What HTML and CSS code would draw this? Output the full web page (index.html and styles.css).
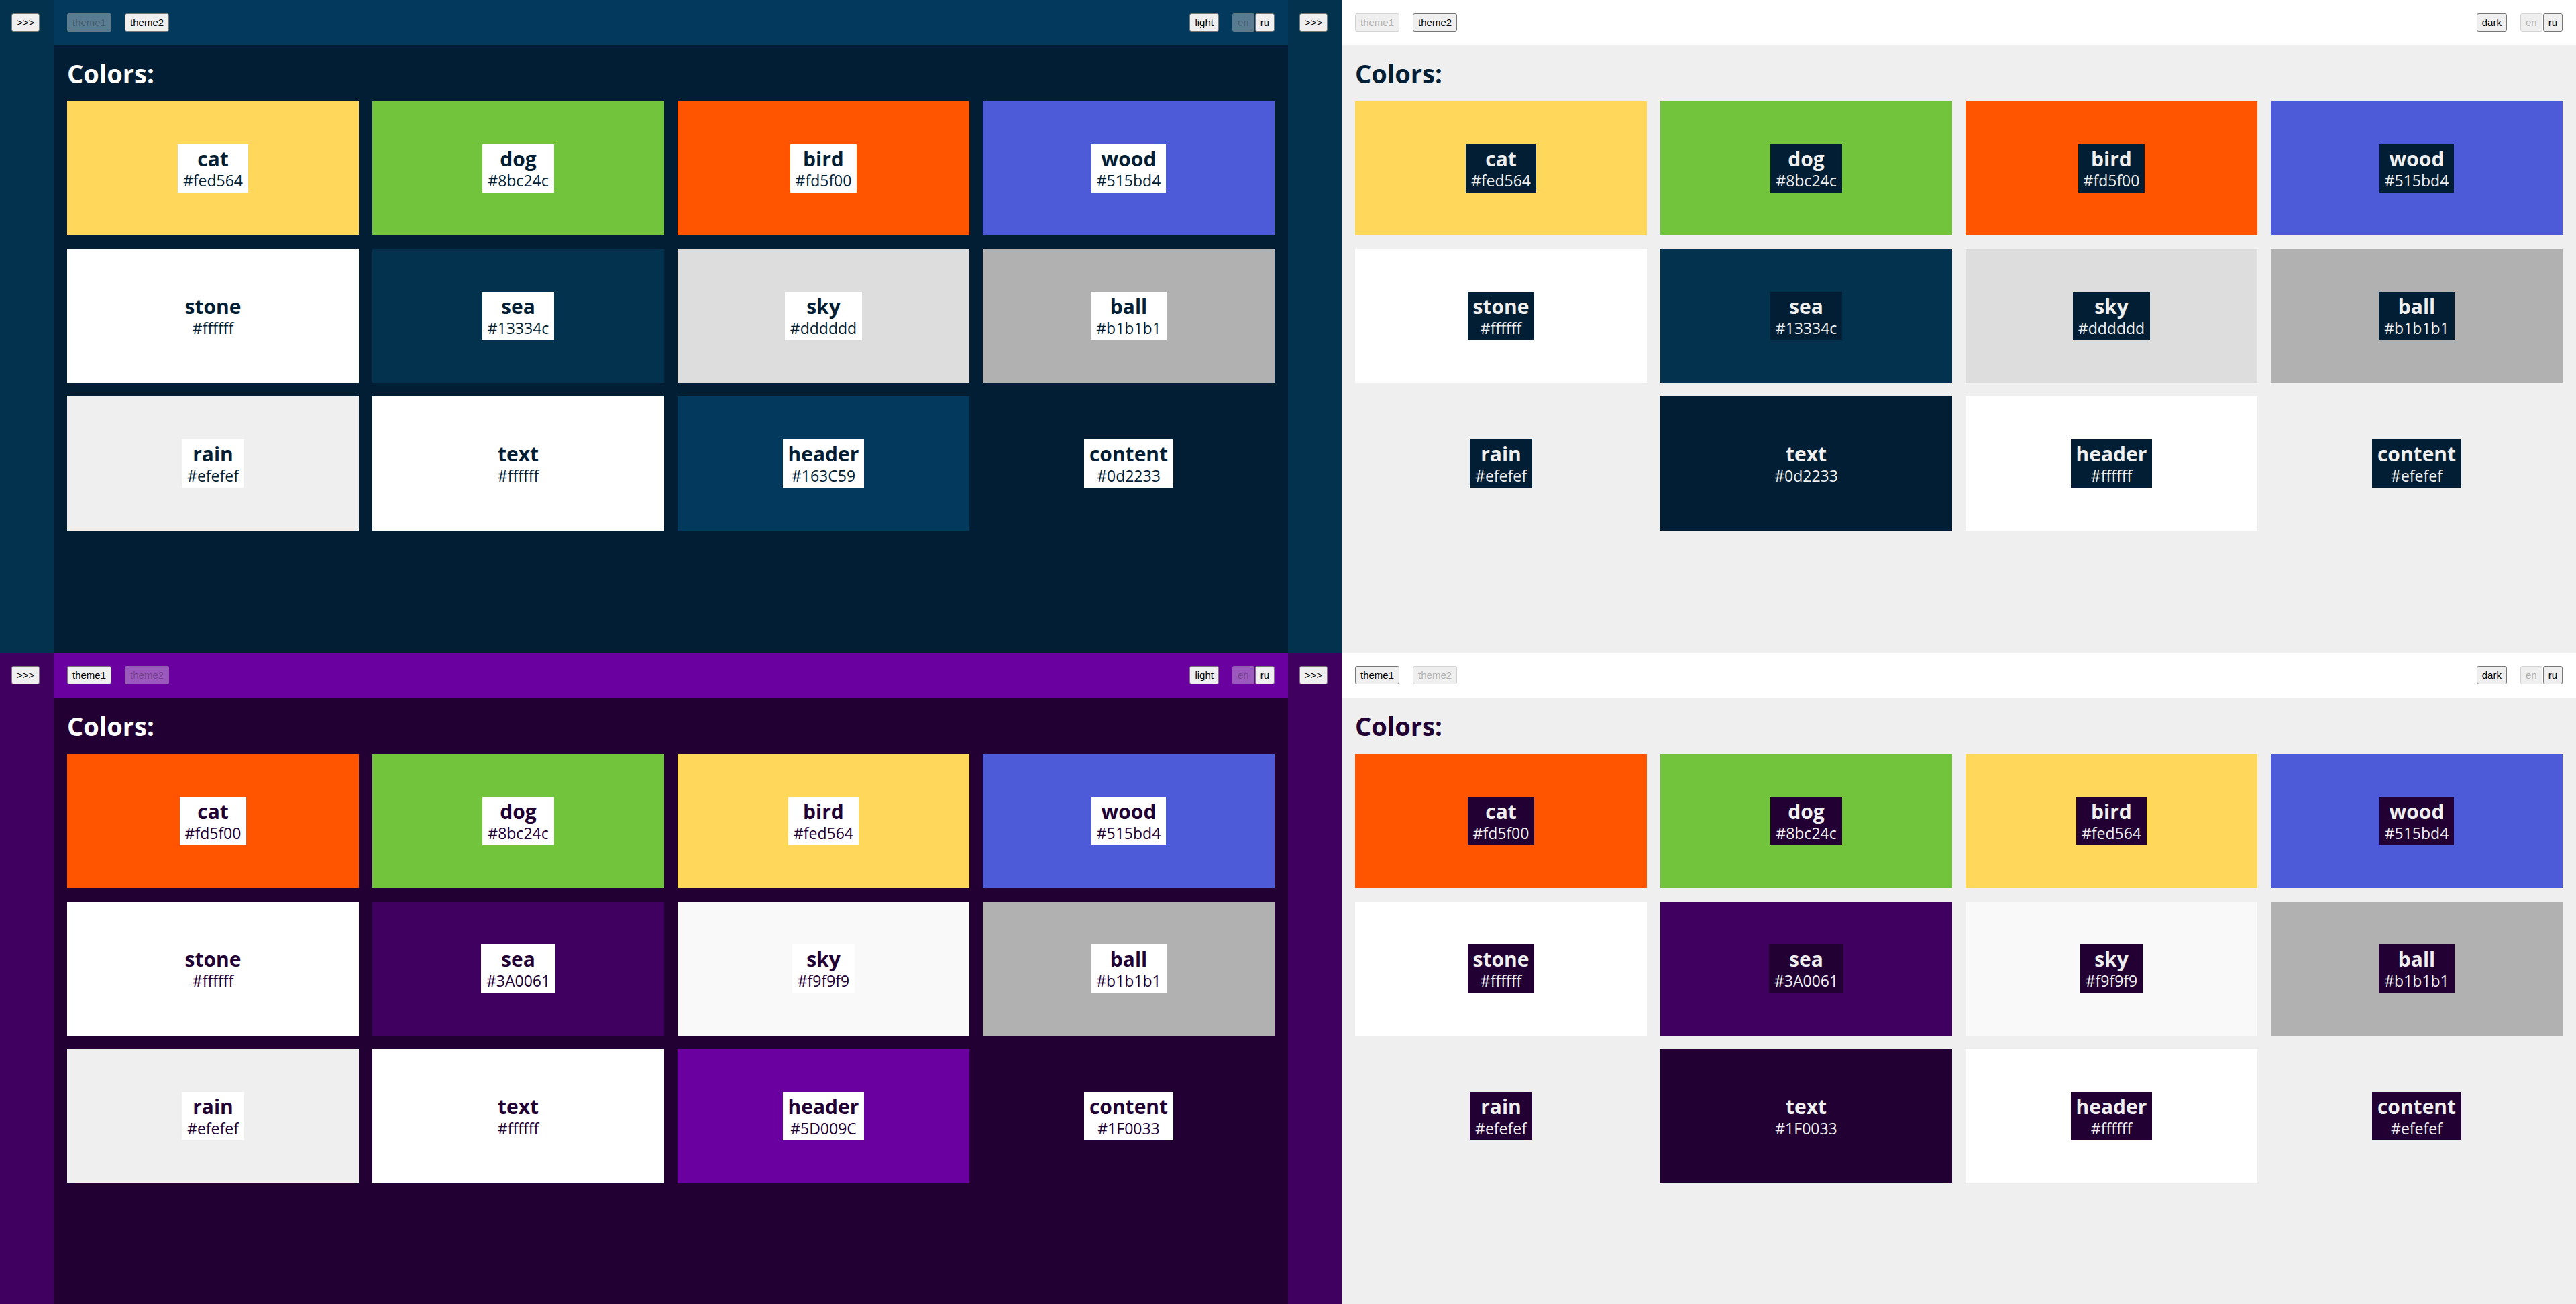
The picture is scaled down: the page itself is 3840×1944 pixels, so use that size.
FILE: index.html
```html
<!DOCTYPE html>
<html lang="en">
<head>
<meta charset="utf-8">
<title>Colors</title>
<link rel="stylesheet" href="styles.css">
</head>
<body>
<div class="screen">

  <div class="app t1 dark">
    <aside class="sidebar"><button class="btn">&gt;&gt;&gt;</button></aside>
    <div class="main">
      <header class="header">
        <div class="group"><button class="btn" disabled>theme1</button><button class="btn">theme2</button></div>
        <div class="group"><button class="btn">light</button><div class="langs"><button class="btn" disabled>en</button><button class="btn">ru</button></div></div>
      </header>
      <section class="content">
        <h2 class="title">Colors:</h2>
        <div class="grid">
          <div class="card c-cat"><div class="label"><div class="name">cat</div><div class="hex">#fed564</div></div></div>
          <div class="card c-dog"><div class="label"><div class="name">dog</div><div class="hex">#8bc24c</div></div></div>
          <div class="card c-bird"><div class="label"><div class="name">bird</div><div class="hex">#fd5f00</div></div></div>
          <div class="card c-wood"><div class="label"><div class="name">wood</div><div class="hex">#515bd4</div></div></div>
          <div class="card c-stone"><div class="label"><div class="name">stone</div><div class="hex">#ffffff</div></div></div>
          <div class="card c-sea"><div class="label"><div class="name">sea</div><div class="hex">#13334c</div></div></div>
          <div class="card c-sky"><div class="label"><div class="name">sky</div><div class="hex">#dddddd</div></div></div>
          <div class="card c-ball"><div class="label"><div class="name">ball</div><div class="hex">#b1b1b1</div></div></div>
          <div class="card c-rain"><div class="label"><div class="name">rain</div><div class="hex">#efefef</div></div></div>
          <div class="card c-text"><div class="label"><div class="name">text</div><div class="hex">#ffffff</div></div></div>
          <div class="card c-header"><div class="label"><div class="name">header</div><div class="hex">#163C59</div></div></div>
          <div class="card c-content"><div class="label"><div class="name">content</div><div class="hex">#0d2233</div></div></div>
        </div>
      </section>
    </div>
  </div>

  <div class="app t1 light">
    <aside class="sidebar"><button class="btn">&gt;&gt;&gt;</button></aside>
    <div class="main">
      <header class="header">
        <div class="group"><button class="btn" disabled>theme1</button><button class="btn">theme2</button></div>
        <div class="group"><button class="btn">dark</button><div class="langs"><button class="btn" disabled>en</button><button class="btn">ru</button></div></div>
      </header>
      <section class="content">
        <h2 class="title">Colors:</h2>
        <div class="grid">
          <div class="card c-cat"><div class="label"><div class="name">cat</div><div class="hex">#fed564</div></div></div>
          <div class="card c-dog"><div class="label"><div class="name">dog</div><div class="hex">#8bc24c</div></div></div>
          <div class="card c-bird"><div class="label"><div class="name">bird</div><div class="hex">#fd5f00</div></div></div>
          <div class="card c-wood"><div class="label"><div class="name">wood</div><div class="hex">#515bd4</div></div></div>
          <div class="card c-stone"><div class="label"><div class="name">stone</div><div class="hex">#ffffff</div></div></div>
          <div class="card c-sea"><div class="label"><div class="name">sea</div><div class="hex">#13334c</div></div></div>
          <div class="card c-sky"><div class="label"><div class="name">sky</div><div class="hex">#dddddd</div></div></div>
          <div class="card c-ball"><div class="label"><div class="name">ball</div><div class="hex">#b1b1b1</div></div></div>
          <div class="card c-rain"><div class="label"><div class="name">rain</div><div class="hex">#efefef</div></div></div>
          <div class="card c-text"><div class="label"><div class="name">text</div><div class="hex">#0d2233</div></div></div>
          <div class="card c-header"><div class="label"><div class="name">header</div><div class="hex">#ffffff</div></div></div>
          <div class="card c-content"><div class="label"><div class="name">content</div><div class="hex">#efefef</div></div></div>
        </div>
      </section>
    </div>
  </div>

  <div class="app t2 dark">
    <aside class="sidebar"><button class="btn">&gt;&gt;&gt;</button></aside>
    <div class="main">
      <header class="header">
        <div class="group"><button class="btn">theme1</button><button class="btn" disabled>theme2</button></div>
        <div class="group"><button class="btn">light</button><div class="langs"><button class="btn" disabled>en</button><button class="btn">ru</button></div></div>
      </header>
      <section class="content">
        <h2 class="title">Colors:</h2>
        <div class="grid">
          <div class="card c-cat"><div class="label"><div class="name">cat</div><div class="hex">#fd5f00</div></div></div>
          <div class="card c-dog"><div class="label"><div class="name">dog</div><div class="hex">#8bc24c</div></div></div>
          <div class="card c-bird"><div class="label"><div class="name">bird</div><div class="hex">#fed564</div></div></div>
          <div class="card c-wood"><div class="label"><div class="name">wood</div><div class="hex">#515bd4</div></div></div>
          <div class="card c-stone"><div class="label"><div class="name">stone</div><div class="hex">#ffffff</div></div></div>
          <div class="card c-sea"><div class="label"><div class="name">sea</div><div class="hex">#3A0061</div></div></div>
          <div class="card c-sky"><div class="label"><div class="name">sky</div><div class="hex">#f9f9f9</div></div></div>
          <div class="card c-ball"><div class="label"><div class="name">ball</div><div class="hex">#b1b1b1</div></div></div>
          <div class="card c-rain"><div class="label"><div class="name">rain</div><div class="hex">#efefef</div></div></div>
          <div class="card c-text"><div class="label"><div class="name">text</div><div class="hex">#ffffff</div></div></div>
          <div class="card c-header"><div class="label"><div class="name">header</div><div class="hex">#5D009C</div></div></div>
          <div class="card c-content"><div class="label"><div class="name">content</div><div class="hex">#1F0033</div></div></div>
        </div>
      </section>
    </div>
  </div>

  <div class="app t2 light">
    <aside class="sidebar"><button class="btn">&gt;&gt;&gt;</button></aside>
    <div class="main">
      <header class="header">
        <div class="group"><button class="btn">theme1</button><button class="btn" disabled>theme2</button></div>
        <div class="group"><button class="btn">dark</button><div class="langs"><button class="btn" disabled>en</button><button class="btn">ru</button></div></div>
      </header>
      <section class="content">
        <h2 class="title">Colors:</h2>
        <div class="grid">
          <div class="card c-cat"><div class="label"><div class="name">cat</div><div class="hex">#fd5f00</div></div></div>
          <div class="card c-dog"><div class="label"><div class="name">dog</div><div class="hex">#8bc24c</div></div></div>
          <div class="card c-bird"><div class="label"><div class="name">bird</div><div class="hex">#fed564</div></div></div>
          <div class="card c-wood"><div class="label"><div class="name">wood</div><div class="hex">#515bd4</div></div></div>
          <div class="card c-stone"><div class="label"><div class="name">stone</div><div class="hex">#ffffff</div></div></div>
          <div class="card c-sea"><div class="label"><div class="name">sea</div><div class="hex">#3A0061</div></div></div>
          <div class="card c-sky"><div class="label"><div class="name">sky</div><div class="hex">#f9f9f9</div></div></div>
          <div class="card c-ball"><div class="label"><div class="name">ball</div><div class="hex">#b1b1b1</div></div></div>
          <div class="card c-rain"><div class="label"><div class="name">rain</div><div class="hex">#efefef</div></div></div>
          <div class="card c-text"><div class="label"><div class="name">text</div><div class="hex">#1F0033</div></div></div>
          <div class="card c-header"><div class="label"><div class="name">header</div><div class="hex">#ffffff</div></div></div>
          <div class="card c-content"><div class="label"><div class="name">content</div><div class="hex">#efefef</div></div></div>
        </div>
      </section>
    </div>
  </div>

</div>
</body>
</html>
```

FILE: styles.css
```css
html, body {
  margin: 0;
  padding: 0;
}

body {
  width: 3840px;
  height: 1944px;
  overflow: hidden;
  font-family: "Open Sans", "Noto Sans", sans-serif;
}

.screen {
  display: grid;
  grid-template-columns: 1920px 1920px;
  grid-template-rows: 973px 971px;
}

/* theme palettes (as displayed on screen) */
.t1 {
  --cat: #ffd75a;
  --dog: #72c43c;
  --bird: #ff5500;
  --wood: #4d5bd9;
  --stone: #ffffff;
  --sea: #02324e;
  --sky: #dddddd;
  --ball: #b1b1b1;
  --rain: #efefef;
}
.t1.dark {
  --text: #ffffff;
  --header: #02395c;
  --content: #021e34;
}
.t1.light {
  --text: #021e34;
  --header: #ffffff;
  --content: #efefef;
}
.t2 {
  --cat: #ff5500;
  --dog: #72c43c;
  --bird: #ffd75a;
  --wood: #4d5bd9;
  --stone: #ffffff;
  --sea: #40005f;
  --sky: #f9f9f9;
  --ball: #b1b1b1;
  --rain: #efefef;
}
.t2.dark {
  --text: #ffffff;
  --header: #6a00a0;
  --content: #220034;
}
.t2.light {
  --text: #220034;
  --header: #ffffff;
  --content: #efefef;
}

.app {
  display: flex;
  overflow: hidden;
  min-height: 0;
}

.sidebar {
  width: 80px;
  flex: none;
  background: var(--sea);
  padding: 20px 0 0 17px;
  box-sizing: border-box;
}

.main {
  flex: 1;
  display: flex;
  flex-direction: column;
  min-width: 0;
}

.header {
  height: 67px;
  flex: none;
  background: var(--header);
  display: flex;
  align-items: center;
  justify-content: space-between;
  padding: 0 20px;
}

.group {
  display: flex;
  align-items: center;
  gap: 20px;
}

.langs {
  display: flex;
  gap: 1px;
}

.btn {
  font-family: "Liberation Sans", Arial, sans-serif;
  font-size: 15px;
  height: 27px;
  padding: 0 7px;
  margin: 0;
  background: #efefef;
  color: #000000;
  border: 1px solid #767676;
  border-radius: 3px;
  box-sizing: border-box;
  line-height: 25px;
}

.btn:disabled {
  background: rgba(239, 239, 239, 0.37);
  color: rgba(16, 16, 16, 0.3);
  border-color: rgba(118, 118, 118, 0.3);
}

.light .btn:disabled {
  background: #efefef;
  color: #b4b4b4;
  border-color: #d2d2d2;
}

.content {
  flex: 1;
  background: var(--content);
  padding: 20px;
}

.title {
  margin: 0 0 20px;
  font-size: 38px;
  line-height: 44px;
  font-weight: 700;
  color: var(--text);
}

.grid {
  display: grid;
  grid-template-columns: repeat(4, 1fr);
  grid-auto-rows: 200px;
  gap: 20px;
}

.card {
  display: flex;
  align-items: center;
  justify-content: center;
}

.c-cat { background: var(--cat); }
.c-dog { background: var(--dog); }
.c-bird { background: var(--bird); }
.c-wood { background: var(--wood); }
.c-stone { background: var(--stone); }
.c-sea { background: var(--sea); }
.c-sky { background: var(--sky); }
.c-ball { background: var(--ball); }
.c-rain { background: var(--rain); }
.c-text { background: var(--text); }
.c-header { background: var(--header); }
.c-content { background: var(--content); }

.label {
  background: var(--text);
  color: var(--content);
  padding: 4px 8px;
  text-align: center;
}

.name {
  font-size: 30px;
  line-height: 36px;
  font-weight: 700;
}

.hex {
  font-size: 23px;
  line-height: 28px;
  font-weight: 400;
}
```
